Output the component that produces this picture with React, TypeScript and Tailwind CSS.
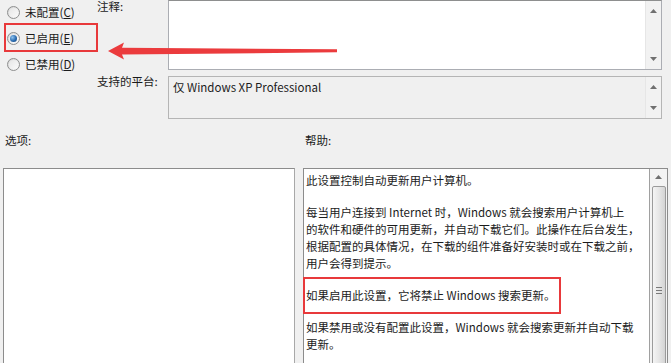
import React from 'react'

const Radio = ({ checked }: { checked?: boolean }) => (
  <div className="w-[13px] h-[13px] rounded-full border border-[#8e8f8f] bg-gradient-to-br from-[#d4d4d4] to-[#fcfcfc] flex items-center justify-center">
    <div className="w-[9px] h-[9px] rounded-full bg-gradient-to-br from-[#e6e6e6] to-[#fafafa] flex items-center justify-center">
      {checked && (
        <div className="w-[7px] h-[7px] rounded-full bg-[radial-gradient(circle_at_35%_35%,#8fc3ef,#2a6bb0_55%,#0d3c73)]" />
      )}
    </div>
  </div>
)

const Arrow = ({ up }: { up?: boolean }) => (
  <svg width="7" height="4" viewBox="0 0 7 4">
    {up ? <polygon points="0,4 3.5,0 7,4" fill="#707070" /> : <polygon points="0,0 3.5,4 7,0" fill="#707070" />}
  </svg>
)

const SmallScrollbar = () => (
  <div className="w-[16px] bg-[#f2f2f2] border-l border-[#e6e6e6] flex flex-col items-center justify-between py-[8px]">
    <Arrow up />
    <Arrow />
  </div>
)

const helpParas: string[][] = [
  ['此设置控制自动更新用户计算机。'],
  [
    '每当用户连接到 Internet 时，Windows 就会搜索用户计算机上',
    '的软件和硬件的可用更新，并自动下载它们。此操作在后台发生，',
    '根据配置的具体情况，在下载的组件准备好安装时或在下载之前，',
    '用户会得到提示。',
  ],
  ['如果启用此设置，它将禁止 Windows 搜索更新。'],
  ['如果禁用或没有配置此设置，Windows 就会搜索更新并自动下载', '更新。'],
]

export default function App() {
  return (
    <div className="relative w-[671px] h-[363px] overflow-hidden bg-[#f0f0f0] text-[#1b1b1b] text-[11.5px] leading-[17px] font-['Noto_Sans_CJK_SC','Microsoft_YaHei',sans-serif]">
      {/* top: state + comment + platform */}
      <div className="flex h-[120px]">
        <div className="w-[97px] flex flex-col -mt-[1px]">
          <div className="flex items-center h-[26px] pl-[7px] gap-[5px]">
            <Radio />
            <span>未配置(<u>C</u>)</span>
          </div>
          <div className="relative flex items-center h-[26px] pl-[7px] gap-[5px]">
            <Radio checked />
            <span>已启用(<u>E</u>)</span>
            <div className="absolute left-[4px] top-[-2px] w-[94px] h-[29px] border-2 border-[#e8393b]" />
          </div>
          <div className="flex items-center h-[26px] pl-[7px] gap-[5px]">
            <Radio />
            <span>已禁用(<u>D</u>)</span>
          </div>
        </div>

        <div className="w-[71px] flex flex-col">
          <div className="h-[75px] -mt-[2px]">注释:</div>
          <div className="whitespace-nowrap">支持的平台:</div>
        </div>

        <div className="w-[494px] flex flex-col">
          <div className="h-[70px] flex border border-[#abadb3] border-t-[#8e8f8f] bg-white">
            <div className="flex-1" />
            <SmallScrollbar />
          </div>
          <div className="mt-[6px] h-[43px] flex border border-[#b5b5b5] bg-[#f0f0f0]">
            <div className="flex-1 pl-[4px] pt-[2px]">仅 Windows XP Professional</div>
            <SmallScrollbar />
          </div>
        </div>
      </div>

      {/* bottom: options + help */}
      <div className="flex mt-[12px] gap-[8px]">
        <div className="w-[295px] pl-[3px] flex flex-col">
          <div className="pl-[2px]">选项:</div>
          <div className="mt-[19px] h-[220px] border border-[#8c8c8c] border-r-[#a8a8a8] bg-white" />
        </div>

        <div className="w-[365px] flex flex-col">
          <div className="pl-[2px]">帮助:</div>
          <div className="mt-[19px] h-[220px] flex border border-[#8c8c8c] bg-white">
            <div className="flex-1 pl-[2px] pt-[3px] flex flex-col gap-[15px] border-r border-[#a0a0a0]">
              {helpParas.map((p, i) => (
                <div key={i} className="relative">
                  {p.map((line, j) => (
                    <div key={j} className="whitespace-nowrap">{line}</div>
                  ))}
                  {i === 2 && (
                    <div className="absolute left-[-3px] top-[-10px] w-[258px] h-[37px] border-2 border-[#e8393b]" />
                  )}
                </div>
              ))}
            </div>
            <div className="w-[17px] bg-[#f3f3f3] flex flex-col items-center pt-[6px]">
              <Arrow up />
              <div className="mt-[7px] w-[14px] flex-1 rounded-[2px] border border-[#9b9b9b] bg-gradient-to-r from-[#f4f4f4] via-[#e6e6e6] to-[#d4d4d4] flex flex-col items-center pt-[100px] gap-[2px]">
                <div className="w-[6px] h-px bg-[#7a7a7a]" />
                <div className="w-[6px] h-px bg-[#7a7a7a]" />
                <div className="w-[6px] h-px bg-[#7a7a7a]" />
              </div>
            </div>
          </div>
        </div>
      </div>

      {/* annotation arrow */}
      <svg className="absolute left-0 top-0" width="671" height="120" viewBox="0 0 671 120">
        <polygon
          points="108,51 124,42.5 122,47.8 337,49.3 337,52.3 122,54.5 124,59.5"
          fill="#eb3b3d"
        />
      </svg>
    </div>
  )
}
